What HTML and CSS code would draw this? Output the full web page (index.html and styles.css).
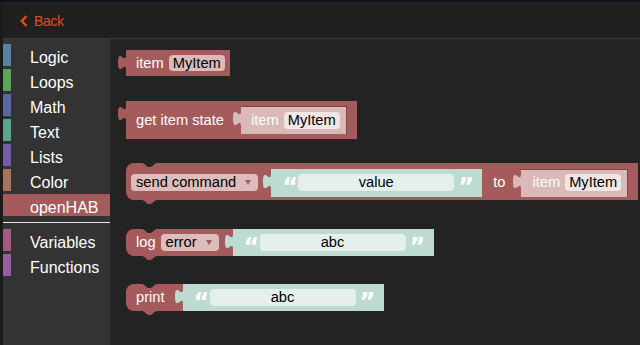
FILE: index.html
```html
<!DOCTYPE html>
<html lang="en">
<head>
    <meta charset="UTF-8">
    <title>openHAB rules - Blockly</title>
    <link rel="stylesheet" href="styles.css">
</head>
<body>
    <div class="topline"></div>
    <div class="app">
        <header class="bar">
            <a class="back">
                <svg width="8" height="12" viewBox="0 0 8 12"><polyline points="6.5,1 1.8,6 6.5,11" /></svg>
                Back
            </a>
        </header>
        <div class="main">
            <nav class="toolbox">
                <div class="cat"><span class="swatch c-logic"></span><span class="name">Logic</span></div>
                <div class="cat"><span class="swatch c-loops"></span><span class="name">Loops</span></div>
                <div class="cat"><span class="swatch c-math"></span><span class="name">Math</span></div>
                <div class="cat"><span class="swatch c-text"></span><span class="name">Text</span></div>
                <div class="cat"><span class="swatch c-lists"></span><span class="name">Lists</span></div>
                <div class="cat"><span class="swatch c-color"></span><span class="name">Color</span></div>
                <div class="cat sel"><span class="swatch"></span><span class="name">openHAB</span></div>
                <div class="sep"></div>
                <div class="cat"><span class="swatch c-vars"></span><span class="name">Variables</span></div>
                <div class="cat"><span class="swatch c-funcs"></span><span class="name">Functions</span></div>
            </nav>

            <div class="workspace">
                <!-- item MyItem -->
                <div class="blk b-item">
                    <svg class="tab" width="8" height="21" viewBox="0 0 8 21"><path d="M8,5 C8,15 0,-3 0,12.5 S8,10 8,20 Z"/></svg>
                    <span class="lbl">item</span>
                    <span class="fld">MyItem</span>
                </div>

                <!-- get item state -->
                <div class="blk b-state">
                    <svg class="tab" width="8" height="21" viewBox="0 0 8 21"><path d="M8,5 C8,15 0,-3 0,12.5 S8,10 8,20 Z"/></svg>
                    <span class="lbl">get item state</span>
                    <div class="sh-item">
                        <svg class="tab" width="8" height="21" viewBox="0 0 8 21"><path d="M8,5 C8,15 0,-3 0,12.5 S8,10 8,20 Z"/></svg>
                        <span class="lbl">item</span>
                        <span class="fld">MyItem</span>
                    </div>
                </div>

                <!-- send command -->
                <div class="blk stmt b-send">
                    <svg class="notch" width="15" height="5" viewBox="0 0 15 5"><path d="M0,0 C3,0 4,4 7,4 h1 C11,4 12,0 15,0 Z"/></svg>
                    <svg class="bump" width="15" height="5" viewBox="0 0 15 5"><path d="M0,0 C3,0 4,4 7,4 h1 C11,4 12,0 15,0 Z"/></svg>
                    <span class="dd">send command<i class="arrow"></i></span>
                    <div class="sh-text">
                        <svg class="tab" width="8" height="21" viewBox="0 0 8 21"><path d="M8,5 C8,15 0,-3 0,12.5 S8,10 8,20 Z"/></svg>
                        <span class="q">&ldquo;</span>
                        <span class="tfld" style="width: 156px">value</span>
                        <span class="q">&rdquo;</span>
                    </div>
                    <span class="lbl to">to</span>
                    <div class="sh-item">
                        <svg class="tab" width="8" height="21" viewBox="0 0 8 21"><path d="M8,5 C8,15 0,-3 0,12.5 S8,10 8,20 Z"/></svg>
                        <span class="lbl">item</span>
                        <span class="fld">MyItem</span>
                    </div>
                </div>

                <!-- log -->
                <div class="blk stmt b-log">
                    <svg class="notch" width="15" height="5" viewBox="0 0 15 5"><path d="M0,0 C3,0 4,4 7,4 h1 C11,4 12,0 15,0 Z"/></svg>
                    <svg class="bump" width="15" height="5" viewBox="0 0 15 5"><path d="M0,0 C3,0 4,4 7,4 h1 C11,4 12,0 15,0 Z"/></svg>
                    <span class="lbl">log</span>
                    <span class="dd">error<i class="arrow"></i></span>
                    <div class="sh-text">
                        <svg class="tab" width="8" height="21" viewBox="0 0 8 21"><path d="M8,5 C8,15 0,-3 0,12.5 S8,10 8,20 Z"/></svg>
                        <span class="q">&ldquo;</span>
                        <span class="tfld" style="width: 146px">abc</span>
                        <span class="q">&rdquo;</span>
                    </div>
                </div>

                <!-- print -->
                <div class="blk stmt b-print">
                    <svg class="notch" width="15" height="5" viewBox="0 0 15 5"><path d="M0,0 C3,0 4,4 7,4 h1 C11,4 12,0 15,0 Z"/></svg>
                    <svg class="bump" width="15" height="5" viewBox="0 0 15 5"><path d="M0,0 C3,0 4,4 7,4 h1 C11,4 12,0 15,0 Z"/></svg>
                    <span class="lbl">print</span>
                    <div class="sh-text">
                        <svg class="tab" width="8" height="21" viewBox="0 0 8 21"><path d="M8,5 C8,15 0,-3 0,12.5 S8,10 8,20 Z"/></svg>
                        <span class="q">&ldquo;</span>
                        <span class="tfld" style="width: 146px">abc</span>
                        <span class="q">&rdquo;</span>
                    </div>
                </div>
            </div>
        </div>
    </div>
</body>
</html>
```

FILE: styles.css
```css
html,body{margin:0; padding:0;}
body{width:640px; height:345px; overflow:hidden; background:#232323; font-family:"Liberation Sans", Arial, sans-serif;}

.topline{height:2px; background:#0b1220;}
.app{height:343px; border-left:3px solid #1b1b1b; display:flex; flex-direction:column;}

/* header */
.bar{height:36px; flex:none; background:#202020; border-bottom:1px solid #3a3a3a; display:flex; align-items:center; padding-left:17px;}
.back{display:flex; align-items:center; gap:6px; color:#e4491c; font-size:14px; letter-spacing:-0.4px; margin-top:2px; cursor:pointer;}
.back svg{fill:none; stroke:#e4491c; stroke-width:2.4;}

.main{flex:1; display:flex;}

/* toolbox */
.toolbox{width:107px; flex:none; background:#333333; padding-top:5px;}
.cat{height:22px; margin-bottom:3px; display:flex; color:#fff; font-size:16px;}
.cat .swatch{width:8px; flex:none;}
.cat .name{padding:5px 0 0 19px; line-height:17px;}
.cat.sel{background:#a55b5b;}
.c-logic{background:#5b80a5;}
.c-loops{background:#5ba55b;}
.c-math{background:#5b67a5;}
.c-text{background:#5ba58c;}
.c-lists{background:#745ba5;}
.c-color{background:#a5745b;}
.c-vars{background:#a55b80;}
.c-funcs{background:#995ba5;}
.sep{height:1px; background:#e5e5e5; margin:6px 0 6px;}

/* workspace */
.workspace{flex:1; display:flex; flex-direction:column; align-items:flex-start; padding:11px 0 0 16px;}

.blk{position:relative; display:flex; align-items:center; box-sizing:border-box; background:#a55b5b; color:#fff; font-size:14.67px; line-height:17px; white-space:nowrap;}
.blk .tab{position:absolute; left:-8px; top:0; fill:#a55b5b;}
.stmt{border-radius:8px 0 0 8px;}
.notch{position:absolute; left:16px; top:0; fill:#232323;}
.bump{position:absolute; left:16px; top:100%; fill:#a55b5b;}

.fld{background:#dcbaba; color:#000; border-radius:4px; height:16px; line-height:16px; padding:0 4px; margin-left:5px;}

.dd{display:flex; align-items:center; background:#dcbcbc; color:#000; border-radius:4px; height:17px; padding:0 7px 0 5px;}
.dd .arrow{width:0; height:0; border-left:3px solid transparent; border-right:3px solid transparent; border-top:5px solid #a55b5b; margin-left:9px;}

/* shadow item block */
.sh-item{position:relative; display:flex; align-items:center; box-sizing:border-box; height:28px; background:#dab9b9; padding:0 7px 0 10px; box-shadow:inset 0 1px 0 #7d4545, inset -1px 0 0 #7d4545;}
.sh-item .tab{fill:#dab9b9;}
.sh-item .fld{background:#f1e5e5; height:17px; line-height:17px;}

/* shadow text block */
.sh-text{position:relative; display:flex; align-items:center; box-sizing:border-box; height:28px; background:#bddbd1; padding:0 12px 0 11px;}
.sh-text .tab{fill:#bddbd1;}
.q{width:12px; height:28px; color:#fff; font-family:"DejaVu Sans", sans-serif; font-weight:bold; font-size:24px; line-height:28px; padding-top:4px; box-sizing:border-box; text-align:center;}
.tfld{background:#e5f0ec; color:#000; border-radius:4px; height:17px; line-height:17px; margin:0 4px; text-align:center;}

/* block instances */
.b-item{height:26px; padding:0 5px 0 10px;}
.b-state{height:38px; padding:0 10px; margin-top:25px;}
.b-state .sh-item{margin-left:17px;}
.b-send{height:37px; padding:2px 10px 0 5px; margin-top:24px;}
.b-send .sh-text{margin-left:13px;}
.b-send .to{margin-left:11px;}
.b-send .sh-item{margin-left:16px; padding-left:11px;}
.b-log{height:27px; padding-left:10px; margin-top:29px;}
.b-log .dd{margin-left:5px;}
.b-log .sh-text{height:27px; margin-left:14px;}
.b-print{height:27px; padding-left:10px; margin-top:28px;}
.b-print .sh-text{height:27px; margin-left:18px;}
```
